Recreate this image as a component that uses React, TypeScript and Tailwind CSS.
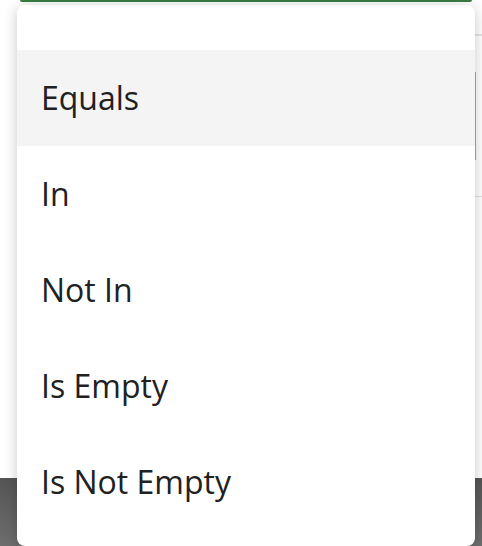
const options = ["Equals", "In", "Not In", "Is Empty", "Is Not Empty"];

const App = () => {
  const selected = 0;

  return (
    <div
      className="relative w-[482px] h-[546px] overflow-hidden bg-white"
      style={{ fontFamily: '"Open Sans", "Noto Sans", sans-serif' }}
    >
      {/* page under the menu */}
      <div className="flex flex-col w-full h-full">
        <div className="flex h-[478px] bg-white">
          <div className="flex-1" />
          <div className="flex flex-col w-[7px]">
            <div className="h-[34px]" />
            <div className="h-[2px] bg-[#e4e4e4]" />
            <div className="flex h-[160px]">
              <div className="w-px my-[36px] bg-[#a8a8a8]" />
            </div>
            <div className="h-px bg-[#e0e0e0]" />
          </div>
        </div>
        <div className="flex-1 bg-gradient-to-b from-[#555555] to-[#6e6e6e]" />
      </div>

      {/* input focus border */}
      <div className="absolute left-[20px] top-0 w-[452px] h-[2px] rounded-b-full bg-[#3a7f44]" />

      {/* dropdown */}
      <div className="absolute left-[17px] top-[5px] w-[458px] h-[541px] rounded-[8px] bg-white shadow-[0_2px_14px_rgba(0,0,0,0.22)]">
        <ul className="flex flex-col pt-[45px]">
          {options.map((option, i) => (
            <li
              key={option}
              className={
                "flex items-center h-[96px] pl-[24px] text-[32px] text-[#212121] " +
                (i === selected ? "bg-[#f4f4f4]" : "bg-white")
              }
            >
              {option}
            </li>
          ))}
        </ul>
      </div>
    </div>
  );
};

export default App;
